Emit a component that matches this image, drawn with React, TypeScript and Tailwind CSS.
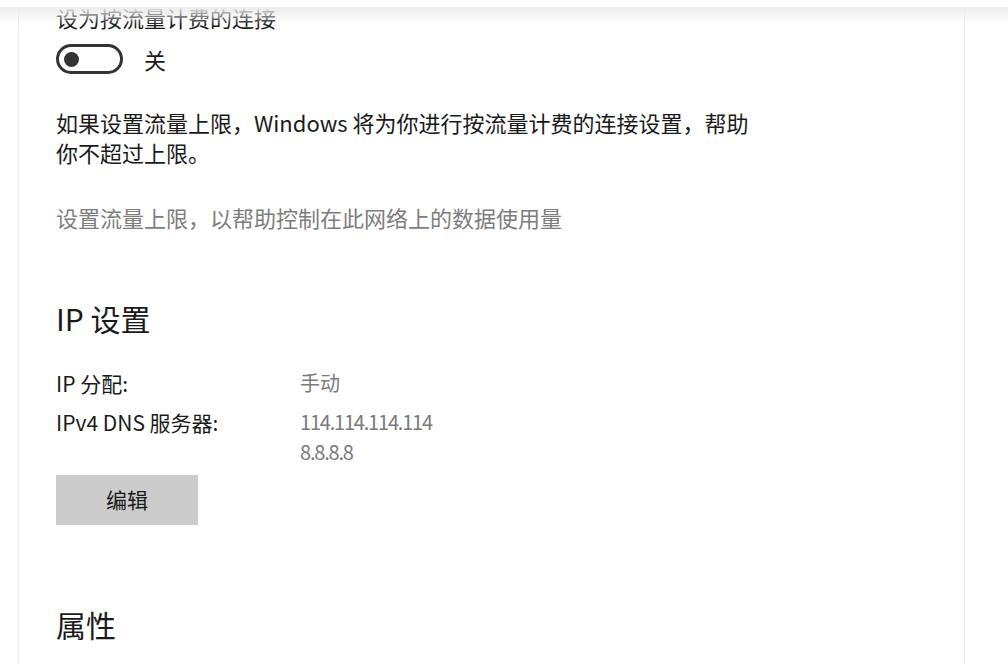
import React from "react";

const font = {
  fontFamily: '"Noto Sans CJK SC", "Noto Sans", sans-serif',
};

function Toggle({ on }: { on: boolean }) {
  return (
    <div className="flex items-center gap-[21px]">
      <div className="w-[67px] h-[30px] rounded-full border-[3px] border-[#333333] flex items-center px-[5px]">
        <div className={`w-[15px] h-[15px] rounded-full bg-[#333333] ${on ? "ml-auto" : ""}`} />
      </div>
      <span className="text-[22px] leading-[30px] text-[#1a1a1a]">{on ? "开" : "关"}</span>
    </div>
  );
}

function InfoRow({ label, values }: { label: string; values: string[] }) {
  return (
    <div className="flex">
      <div className="w-[244px] text-[21px] leading-[30px] text-[#1a1a1a]">{label}</div>
      <div className="flex flex-col text-[20px] leading-[30px] text-[#7a7a7a]">
        {values.map((v) => (
          <span key={v} className={/^[\d.]+$/.test(v) ? "tracking-[-1.2px]" : ""}>
            {v}
          </span>
        ))}
      </div>
    </div>
  );
}

export default function App() {
  return (
    <div className="relative w-[1008px] h-[664px] overflow-hidden bg-white" style={font}>
      {/* panel with faint side rules */}
      <div className="flex h-full pt-[7px]">
        <div className="w-[18px] shrink-0" />
        <div className="w-[947px] shrink-0 border-x border-[#ebebeb] pl-[37px] -mt-[5px]">
          <div className="text-[22px] leading-[30px] text-[#1a1a1a]">设为按流量计费的连接</div>

          <div className="mt-[12px]">
            <Toggle on={false} />
          </div>

          <p className="mt-[33px] text-[22px] leading-[30px] text-[#1a1a1a]">
            如果设置流量上限，Windows 将为你进行按流量计费的连接设置，帮助
            <br />
            你不超过上限。
          </p>

          <div className="mt-[35px] text-[22px] leading-[30px] text-[#7d7d7d]">
            设置流量上限，以帮助控制在此网络上的数据使用量
          </div>

          <h2 className="mt-[66px] text-[30px] leading-[40px] text-[#1a1a1a]">IP 设置</h2>

          <div className="mt-[30px]">
            <InfoRow label="IP 分配:" values={["手动"]} />
          </div>
          <div className="mt-[9px]">
            <InfoRow label="IPv4 DNS 服务器:" values={["114.114.114.114", "8.8.8.8"]} />
          </div>

          <button className="mt-[8px] w-[142px] h-[50px] bg-[#cccccc] text-[21px] text-[#1a1a1a]">
            编辑
          </button>

          <h2 className="mt-[79px] text-[30px] leading-[40px] text-[#1a1a1a]">属性</h2>
        </div>
      </div>

      {/* top fade from the title bar */}
      <div className="absolute left-0 right-0 top-0 h-[7px] bg-white" />
      <div className="absolute left-0 right-0 top-[7px] h-[18px] bg-gradient-to-b from-[#ececec] to-white/0" />
    </div>
  );
}
